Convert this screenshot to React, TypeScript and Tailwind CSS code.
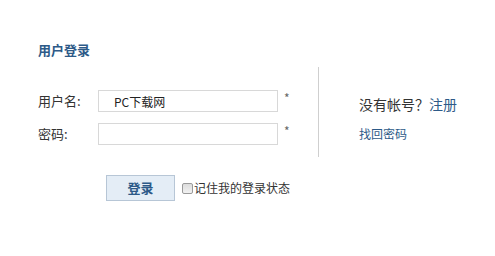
import React from 'react';

const font = { fontFamily: '"Microsoft YaHei", "Noto Sans CJK SC", "Liberation Sans", sans-serif' };

export default function App() {
  return (
    <div className="w-[495px] h-[256px] bg-white text-[#333]" style={font}>
      <div className="pl-[38px] pt-[41px]">
        <h2 className="text-[13px] font-bold text-[#2d5a88] leading-[18px]">用户登录</h2>

        <div className="flex mt-[8px]">
          {/* Form */}
          <div className="w-[280px] pt-[23px]">
            <div className="flex items-center h-[22px]">
              <label className="w-[60px] text-[13px] leading-[22px]">用户名:</label>
              <input
                defaultValue="PC下载网"
                className="w-[180px] h-[22px] border border-[#d8d8d8] pl-[15px] text-[12px] text-[#222] outline-none"
              />
              <span className="ml-[6px] text-[12px] text-[#666] -mt-[6px]">*</span>
            </div>
            <div className="flex items-center h-[22px] mt-[11px]">
              <label className="w-[60px] text-[13px] leading-[22px]">密码:</label>
              <input
                type="password"
                className="w-[180px] h-[22px] border border-[#d8d8d8] pl-[6px] text-[12px] outline-none"
              />
              <span className="ml-[6px] text-[12px] text-[#666] -mt-[6px]">*</span>
            </div>
            <div className="flex items-center mt-[30px] pl-[68px]">
              <button className="w-[69px] h-[26px] bg-[#e4edf6] border border-[#b7c6d6] text-[13px] font-bold text-[#2d5a88]">
                登录
              </button>
              <label className="flex items-center ml-[7px] text-[12px] text-[#333]">
                <span className="w-[11px] h-[11px] mr-[1px] rounded-[2px] border border-[#9a9a9a] bg-gradient-to-b from-[#dcdcdc] to-[#f2f2f2]" />
                记住我的登录状态
              </label>
            </div>
          </div>

          {/* Divider */}
          <div className="w-px h-[90px] bg-[#cfcfcf] mt-0" />

          {/* Right side */}
          <div className="pl-[40px] pt-[27px]">
            <p className="text-[14px] leading-[20px] text-[#333]">
              没有帐号？<a className="text-[#2d5a88]">注册</a>
            </p>
            <a className="block mt-[12px] text-[12px] leading-[16px] text-[#2d5a88]">找回密码</a>
          </div>
        </div>
      </div>
    </div>
  );
}
